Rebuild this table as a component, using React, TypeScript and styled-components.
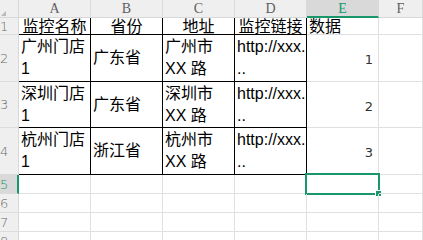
import {Fragment} from 'react';
import styled, {createGlobalStyle} from 'styled-components';

const GREEN = '#17976a';
const GRID = '#e0e0e0';

const GlobalStyle = createGlobalStyle`
  html, body {
    margin: 0;
    padding: 0;
    background: #ffffff;
    overflow: hidden;
  }
`;

const Sheet = styled.div`
  display: grid;
  grid-template-columns: 19px repeat(5, 72px) 1fr;
  grid-template-rows: 18px 17px 47px 46px 47px 19px 19px 19px 19px;
  width: 423px;
  height: 240px;
  overflow: hidden;
  font-family: "Liberation Sans", "Noto Sans CJK SC", sans-serif;
`;

const Corner = styled.div`
  background: #efefef;
  border-right: 1px solid #d8d8d8;
  border-bottom: 1px solid #d8d8d8;
  display: flex;
  align-items: flex-end;
  padding: 0 0 1px 1px;
  box-sizing: border-box;

  &::after {
    content: '';
    width: 0;
    height: 0;
    border-left: 5px solid transparent;
    border-bottom: 5px solid #b9b9b9;
  }
`;

const ColHead = styled.div<{ $active?: boolean }>`
  background: ${p => p.$active ? '#d9d9d9' : '#efefef'};
  border-right: 1px solid #dadada;
  border-bottom: ${p => p.$active ? `2px solid ${GREEN}` : '1px solid #d8d8d8'};
  box-sizing: border-box;
  display: flex;
  align-items: center;
  justify-content: center;
  font-family: "Liberation Serif", serif;
  font-size: 14px;
  color: ${p => p.$active ? GREEN : '#606060'};
  padding-top: ${p => p.$active ? '1px' : '0'};
`;

const RowHead = styled.div<{ $active?: boolean }>`
  background: ${p => p.$active ? '#d9d9d9' : '#efefef'};
  border-right: ${p => p.$active ? `2px solid ${GREEN}` : '1px solid #d8d8d8'};
  border-bottom: 1px solid #dcdcdc;
  box-sizing: border-box;
  display: flex;
  align-items: center;
  overflow: hidden;
  font-family: "DejaVu Sans", sans-serif;
  font-weight: 200;
  font-size: 13px;
  color: ${p => p.$active ? GREEN : '#6a6a6a'};
  padding-left: 0;
`;

const Cell = styled.div<{ $ruled?: boolean; $align?: 'left' | 'center' | 'right' }>`
  position: relative;
  box-sizing: border-box;
  border-right: 1px solid ${p => p.$ruled ? '#000' : GRID};
  border-bottom: 1px solid ${p => p.$ruled ? '#000' : GRID};
  display: flex;
  flex-direction: column;
  justify-content: center;
  align-items: ${p => p.$align === 'center' ? 'center' : p.$align === 'right' ? 'flex-end' : 'flex-start'};
  padding: 0 2px 0 2px;
  font-size: 16px;
  line-height: 22px;
  color: #000;
  white-space: nowrap;
`;

const HeadText = styled.span`
  line-height: 17px;
`;

const Num = styled.span`
  font-family: "DejaVu Sans", sans-serif;
  font-size: 13px;
  font-weight: 400;
  color: #333;
  padding: 4px 3px 0 0;
`;

const Selection = styled.div`
  position: absolute;
  left: -2px;
  top: -2px;
  width: 75px;
  height: 22px;
  box-sizing: border-box;
  border: 2px solid ${GREEN};
`;

const Handle = styled.div`
  position: absolute;
  left: 68px;
  top: 15px;
  width: 5px;
  height: 5px;
  background: ${GREEN};
  border: 1px solid #fff;
`;

const columns = ['A', 'B', 'C', 'D', 'E', 'F'];
const headers = ['监控名称', '省份', '地址', '监控链接', '数据'];

const rows = [
  {lines: [['广州门店', '1'], ['广东省'], ['广州市', 'XX 路'], ['http://xxx.', '..']], value: 1},
  {lines: [['深圳门店', '1'], ['广东省'], ['深圳市', 'XX 路'], ['http://xxx.', '..']], value: 2},
  {lines: [['杭州门店', '1'], ['浙江省'], ['杭州市', 'XX 路'], ['http://xxx.', '..']], value: 3},
];

export default function App() {
  return (
    <>
      <GlobalStyle/>
      <Sheet>
        <Corner/>
        {columns.map(c => (
          <ColHead key={c} $active={c === 'E'}>{c}</ColHead>
        ))}

        <RowHead>1</RowHead>
        {headers.map((h, idx) => (
          <Cell key={`h-${idx}`} $ruled={idx < 4} $align={idx < 4 ? 'center' : 'left'}>
            <HeadText>{h}</HeadText>
          </Cell>
        ))}
        <Cell/>

        {rows.map((row, r) => (
          <Fragment key={`row-${r}`}>
            <RowHead>{r + 2}</RowHead>
            {row.lines.map((cell, c) => (
              <Cell key={`c-${r}-${c}`} $ruled>
                {cell.map((line, l) => <span key={l}>{line}</span>)}
              </Cell>
            ))}
            <Cell $align='right'><Num>{row.value}</Num></Cell>
            <Cell/>
          </Fragment>
        ))}

        {[5, 6, 7, 8].map(n => (
          <Fragment key={`empty-${n}`}>
            <RowHead $active={n === 5}>{n}</RowHead>
            {columns.map(c => (
              <Cell key={`${c}${n}`}>
                {n === 5 && c === 'E' && <><Selection/><Handle/></>}
              </Cell>
            ))}
          </Fragment>
        ))}
      </Sheet>
    </>
  );
}
